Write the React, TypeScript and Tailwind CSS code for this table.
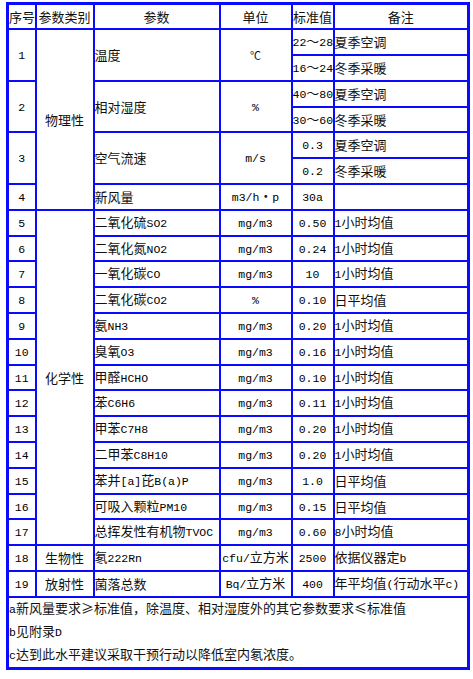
import React from "react";

function T({ s }: { s: string }) {
  const parts = s.split(/([\x00-\x7F]+)/).filter((p) => p.length > 0);
  return (
    <>
      {parts.map((p, i) =>
        /^[\x00-\x7F]+$/.test(p) ? (
          <span key={i} className="font-['Liberation_Mono',monospace] text-[11.5px] text-black">
            {p}
          </span>
        ) : (
          <span key={i}>{p}</span>
        )
      )}
    </>
  );
}

const td = "border-2 border-[#0a0aff] p-0 align-middle whitespace-nowrap";
const c = td + " text-center";
const l = td + " text-left";

type Row = { no: string; param: string; unit: string; val: string; note: string };

const chem: Row[] = [
  { no: "5", param: "二氧化硫SO2", unit: "mg/m3", val: "0.50", note: "1小时均值" },
  { no: "6", param: "二氧化氮NO2", unit: "mg/m3", val: "0.24", note: "1小时均值" },
  { no: "7", param: "一氧化碳CO", unit: "mg/m3", val: "10", note: "1小时均值" },
  { no: "8", param: "二氧化碳CO2", unit: "%", val: "0.10", note: "日平均值" },
  { no: "9", param: "氨NH3", unit: "mg/m3", val: "0.20", note: "1小时均值" },
  { no: "10", param: "臭氧O3", unit: "mg/m3", val: "0.16", note: "1小时均值" },
  { no: "11", param: "甲醛HCHO", unit: "mg/m3", val: "0.10", note: "1小时均值" },
  { no: "12", param: "苯C6H6", unit: "mg/m3", val: "0.11", note: "1小时均值" },
  { no: "13", param: "甲苯C7H8", unit: "mg/m3", val: "0.20", note: "1小时均值" },
  { no: "14", param: "二甲苯C8H10", unit: "mg/m3", val: "0.20", note: "1小时均值" },
  { no: "15", param: "苯并[a]芘B(a)P", unit: "mg/m3", val: "1.0", note: "日平均值" },
  { no: "16", param: "可吸入颗粒PM10", unit: "mg/m3", val: "0.15", note: "日平均值" },
  { no: "17", param: "总挥发性有机物TVOC", unit: "mg/m3", val: "0.60", note: "8小时均值" },
];

export default function App() {
  const rh = "h-[25.8px]";
  return (
    <div className="bg-white w-[473px] h-[679px] pt-[2px] pl-[6px] text-[13px] text-[#111] font-['Noto_Sans_CJK_SC','Noto_Sans',sans-serif]">
      <table className="border-collapse table-fixed w-[461px] border-[3px] border-[#0a0aff] leading-[16px]">
        <colgroup>
          <col className="w-[28px]" />
          <col className="w-[58px]" />
          <col className="w-[126px]" />
          <col className="w-[72px]" />
          <col className="w-[42px]" />
          <col className="w-[135px]" />
        </colgroup>
        <tbody>
          <tr className={rh}>
            <td className={c}>序号</td>
            <td className={c}>参数类别</td>
            <td className={c}>参数</td>
            <td className={c}>单位</td>
            <td className={c}>标准值</td>
            <td className={c}>备注</td>
          </tr>
          <tr className={rh}>
            <td className={c} rowSpan={2}><T s="1" /></td>
            <td className={c} rowSpan={7}>物理性</td>
            <td className={l} rowSpan={2}>温度</td>
            <td className={c} rowSpan={2}><span className="text-[11px]">℃</span></td>
            <td className={c}><T s="22" />～<T s="28" /></td>
            <td className={l}>夏季空调</td>
          </tr>
          <tr className={rh}>
            <td className={c}><T s="16" />～<T s="24" /></td>
            <td className={l}>冬季采暖</td>
          </tr>
          <tr className={rh}>
            <td className={c} rowSpan={2}><T s="2" /></td>
            <td className={l} rowSpan={2}>相对湿度</td>
            <td className={c} rowSpan={2}><T s="%" /></td>
            <td className={c}><T s="40" />～<T s="80" /></td>
            <td className={l}>夏季空调</td>
          </tr>
          <tr className={rh}>
            <td className={c}><T s="30" />～<T s="60" /></td>
            <td className={l}>冬季采暖</td>
          </tr>
          <tr className={rh}>
            <td className={c} rowSpan={2}><T s="3" /></td>
            <td className={l} rowSpan={2}>空气流速</td>
            <td className={c} rowSpan={2}><T s="m/s" /></td>
            <td className={c}><T s="0.3" /></td>
            <td className={l}>夏季空调</td>
          </tr>
          <tr className={rh}>
            <td className={c}><T s="0.2" /></td>
            <td className={l}>冬季采暖</td>
          </tr>
          <tr className={rh}>
            <td className={c}><T s="4" /></td>
            <td className={l}>新风量</td>
            <td className={c}><T s="m3/h" />・<T s="p" /></td>
            <td className={c}><T s="30a" /></td>
            <td className={l}></td>
          </tr>
          {chem.map((r, i) => (
            <tr className={rh} key={r.no}>
              <td className={c}><T s={r.no} /></td>
              {i === 0 && (
                <td className={c} rowSpan={13}>化学性</td>
              )}
              <td className={l}><T s={r.param} /></td>
              <td className={c}><T s={r.unit} /></td>
              <td className={c}><T s={r.val} /></td>
              <td className={l}><T s={r.note} /></td>
            </tr>
          ))}
          <tr className={rh}>
            <td className={c}><T s="18" /></td>
            <td className={c}>生物性</td>
            <td className={l}><T s="氡222Rn" /></td>
            <td className={c}><T s="cfu/立方米" /></td>
            <td className={c}><T s="2500" /></td>
            <td className={l}><T s="依据仪器定b" /></td>
          </tr>
          <tr className={rh}>
            <td className={c}><T s="19" /></td>
            <td className={c}>放射性</td>
            <td className={l}>菌落总数</td>
            <td className={c}><T s="Bq/立方米" /></td>
            <td className={c}><T s="400" /></td>
            <td className={l}><T s="年平均值(行动水平c)" /></td>
          </tr>
          <tr>
            <td className={td + " text-left"} colSpan={6}>
              <div className="h-[23px] flex items-center">
                <span><T s="a新风量要求≥标准值，除温度、相对湿度外的其它参数要求≤标准值" /></span>
              </div>
              <div className="h-[23px] flex items-center">
                <span><T s="b见附录D" /></span>
              </div>
              <div className="h-[23px] flex items-center">
                <span><T s="c达到此水平建议采取干预行动以降低室内氡浓度。" /></span>
              </div>
            </td>
          </tr>
        </tbody>
      </table>
    </div>
  );
}
